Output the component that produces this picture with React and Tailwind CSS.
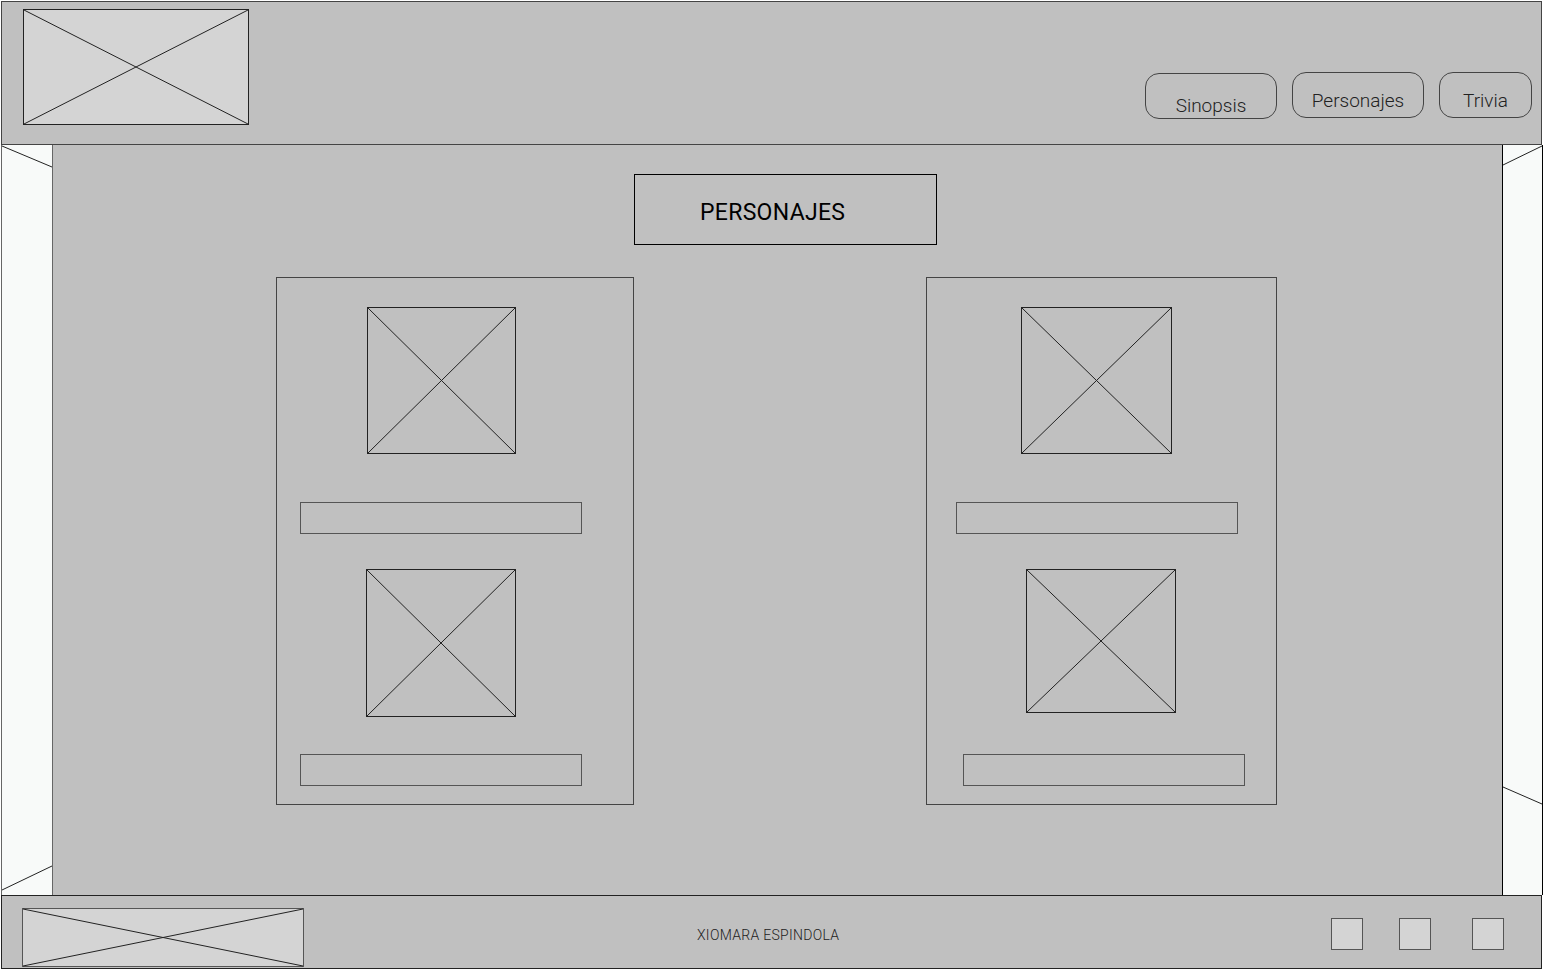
import React from 'react';

// placeholder de imagen con la X
function ImgBox({ w, h, fill = 'transparent', stroke = '#222', className = '' }) {
  return (
    <svg width={w} height={h} className={`block shrink-0 ${className}`}>
      <rect x="0.5" y="0.5" width={w - 1} height={h - 1} fill={fill} stroke={stroke} />
      <line x1="1" y1="1" x2={w - 1} y2={h - 1} stroke="#222" />
      <line x1={w - 1} y1="1" x2="1" y2={h - 1} stroke="#222" />
    </svg>
  );
}

function NavBtn({ children, w, pad }) {
  return (
    <button className={`h-[46px] ${w} rounded-[14px] border border-[#444] text-[19px] font-light text-[#222] flex justify-center ${pad}`}>
      {children}
    </button>
  );
}

function Bar({ className = '' }) {
  return <div className={`h-[32px] w-[282px] border border-[#555] ${className}`} />;
}

export default function App() {
  return (
    <div className="w-[1543px] h-[969px] bg-white flex flex-col font-['Roboto',sans-serif] overflow-hidden">
      {/* Header */}
      <header className="h-[144px] shrink-0 bg-[#c0c0c0] border border-[#444] ml-px mt-px w-[1541px] flex items-start">
        <ImgBox w={226} h={116} fill="#d4d4d4" className="ml-[21px] mt-[7px]" />
        <nav className="ml-auto mr-[9px] mt-[70px] flex items-start gap-[15px]">
          <NavBtn w="w-[132px] mt-[1px]" pad="pt-[18px]">Sinopsis</NavBtn>
          <NavBtn w="w-[132px]" pad="pt-[14px]">Personajes</NavBtn>
          <NavBtn w="w-[93px]" pad="pt-[14px]">Trivia</NavBtn>
        </nav>
      </header>

      {/* Contenido */}
      <div className="h-[750px] shrink-0 flex">
        <div className="w-[52px] ml-px bg-[#f8faf9] border-l border-r border-[#666]">
          <svg width="50" height="750" className="block">
            <line x1="0" y1="1" x2="50" y2="22" stroke="#222" />
            <line x1="50" y1="721" x2="0" y2="745" stroke="#222" />
          </svg>
        </div>

        <main className="flex-1 bg-[#c0c0c0] flex flex-col">
          <div className="mt-[29px] ml-[581px] w-[303px] h-[71px] border border-black flex items-center pl-[65px] pt-[7px] text-[23px] tracking-[0.3px] text-black">
            PERSONAJES
          </div>

          <div className="mt-[32px] flex items-start">
            <section className="ml-[223px] w-[358px] h-[528px] border border-[#444] flex flex-col">
              <ImgBox w={149} h={147} className="ml-[90px] mt-[29px]" />
              <Bar className="ml-[23px] mt-[48px]" />
              <ImgBox w={150} h={148} className="ml-[89px] mt-[35px]" />
              <Bar className="ml-[23px] mt-[37px]" />
            </section>

            <section className="ml-[292px] w-[351px] h-[528px] border border-[#444] flex flex-col">
              <ImgBox w={151} h={147} className="ml-[94px] mt-[29px]" />
              <Bar className="ml-[29px] mt-[48px]" />
              <ImgBox w={150} h={144} className="ml-[99px] mt-[35px]" />
              <Bar className="ml-[36px] mt-[41px]" />
            </section>
          </div>
        </main>

        <div className="w-[41px] bg-[#f8faf9] border-l border-r border-black">
          <svg width="39" height="750" className="block">
            <line x1="0" y1="20" x2="39" y2="1" stroke="#222" />
            <line x1="0" y1="642" x2="39" y2="659" stroke="#222" />
          </svg>
        </div>
      </div>

      {/* Footer */}
      <footer className="h-[74px] w-[1541px] ml-px bg-[#c0c0c0] border border-[#222] flex items-start relative">
        <ImgBox w={282} h={59} fill="#d4d4d4" stroke="#555" className="ml-[20px] mt-[12px]" />
        <span className="absolute left-[695px] top-[29px] text-[14px] font-light text-[#222] tracking-[0.3px]">XIOMARA ESPINDOLA</span>
        <div className="ml-auto mr-[37px] mt-[22px] flex gap-[36px]">
          <div className="w-[32px] h-[32px] bg-[#d4d4d4] border border-[#555]" />
          <div className="w-[32px] h-[32px] bg-[#d4d4d4] border border-[#555]" />
          <div className="w-[32px] h-[32px] bg-[#d4d4d4] border border-[#555] ml-[5px]" />
        </div>
      </footer>
    </div>
  );
}
